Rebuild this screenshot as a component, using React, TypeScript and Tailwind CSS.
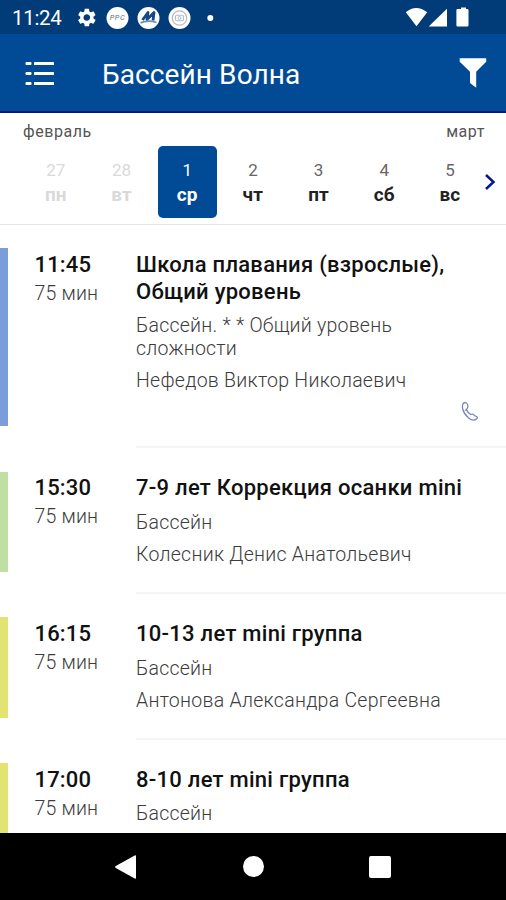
import React from "react";

type Day = { num: string; name: string; state: "past" | "active" | "normal" };

const days: Day[] = [
  { num: "27", name: "пн", state: "past" },
  { num: "28", name: "вт", state: "past" },
  { num: "1", name: "ср", state: "active" },
  { num: "2", name: "чт", state: "normal" },
  { num: "3", name: "пт", state: "normal" },
  { num: "4", name: "сб", state: "normal" },
  { num: "5", name: "вс", state: "normal" },
];

const dayStyles = {
  past: "text-[#d9d9d9]",
  active: "bg-[#014b96] text-white",
  normal: "text-[#222]",
};

type Lesson = {
  time: string;
  title: string;
  place: string;
  coach?: string;
  bar: string;
  barHeight: string;
  rowHeight: string;
  phone?: boolean;
};

const lessons: Lesson[] = [
  {
    time: "11:45",
    title: "Школа плавания (взрослые), Общий уровень",
    place: "Бассейн. * * Общий уровень сложности",
    coach: "Нефедов Виктор Николаевич",
    bar: "bg-[#7b9edb]",
    barHeight: "h-[178px]",
    rowHeight: "h-[223.2px]",
    phone: true,
  },
  {
    time: "15:30",
    title: "7-9 лет Коррекция осанки mini",
    place: "Бассейн",
    coach: "Колесник Денис Анатольевич",
    bar: "bg-[#bfdfa3]",
    barHeight: "h-[100.3px]",
    rowHeight: "h-[145.7px]",
  },
  {
    time: "16:15",
    title: "10-13 лет mini группа",
    place: "Бассейн",
    coach: "Антонова Александра Сергеевна",
    bar: "bg-[#e3e374]",
    barHeight: "h-[100.3px]",
    rowHeight: "h-[145.7px]",
  },
  {
    time: "17:00",
    title: "8-10 лет mini группа",
    place: "Бассейн",
    bar: "bg-[#e3e374]",
    barHeight: "h-[100.3px]",
    rowHeight: "h-[145.7px]",
  },
];

function StatusBar() {
  return (
    <div className="flex h-[34px] shrink-0 items-center bg-[#013c79] pl-3 text-white">
      <span className="mt-[2px] w-[65px] text-[20.5px] leading-none tracking-[-0.3px]">11:24</span>
      <svg className="mt-px h-[22px] w-[140px]" viewBox="0 0 140 22" fill="none">
        <path
          fill="#fff"
          transform="translate(-1.2 -0.5) scale(0.92)"
          d="M19.14 12.94c.04-.3.06-.61.06-.94 0-.32-.02-.64-.07-.94l2.03-1.58a.49.49 0 0 0 .12-.61l-1.92-3.32a.488.488 0 0 0-.59-.22l-2.39.96c-.5-.38-1.03-.7-1.62-.94l-.36-2.54a.484.484 0 0 0-.48-.41h-3.84c-.24 0-.43.17-.47.41l-.36 2.54c-.59.24-1.13.57-1.62.94l-2.39-.96c-.22-.08-.47 0-.59.22L2.74 8.87c-.12.21-.08.47.12.61l2.03 1.58c-.05.3-.09.63-.09.94s.02.64.07.94l-2.03 1.58a.49.49 0 0 0-.12.61l1.92 3.32c.12.22.37.29.59.22l2.39-.96c.5.38 1.03.7 1.62.94l.36 2.54c.05.24.24.41.48.41h3.84c.24 0 .44-.17.47-.41l.36-2.54c.59-.24 1.13-.56 1.62-.94l2.39.96c.22.08.47 0 .59-.22l1.92-3.32c.12-.22.07-.47-.12-.61l-2.01-1.58zM12 15.6A3.61 3.61 0 0 1 8.4 12c0-1.98 1.62-3.6 3.6-3.6s3.6 1.62 3.6 3.6-1.62 3.6-3.6 3.6z"
        />
        <circle cx="40.5" cy="11" r="11" fill="#fff" />
        <text x="40.5" y="13.4" textAnchor="middle" fontSize="7.5" letterSpacing="0.5" fontStyle="italic" fill="#5f7286" fontFamily="Roboto, sans-serif">PPC</text>
        <circle cx="71.5" cy="11" r="11" fill="#fff" />
        <path d="M65.5 13L71 5.5L70 12.5L77 5.5L76 13.5" stroke="#174a83" strokeWidth="2.8" strokeLinejoin="round" />
        <path d="M63.5 15.8Q71 12.8 79.5 15.5" stroke="#6f8fb5" strokeWidth="1.8" />
        <circle cx="102.5" cy="11" r="11" fill="#fff" />
        <circle cx="102.5" cy="11" r="7.2" stroke="#b3bcc8" strokeWidth="1.3" />
        <rect x="98.5" y="8.2" width="8" height="5.6" rx="1.5" stroke="#b3bcc8" strokeWidth="1.1" />
        <circle cx="102.5" cy="11" r="1.5" stroke="#b3bcc8" />
        <circle cx="133.3" cy="11" r="3" fill="#fff" />
      </svg>
      <svg className="ml-auto mr-[36px] h-[22px] w-[66px]" viewBox="0 0 66 22" fill="#fff">
        <path d="M1.8 6.3Q12 -2.2 23.2 6.3L12.5 20.3z" />
        <path d="M43 2.7V20.5H24.7z" />
        <path d="M55 3h2V1.5h5V3h1.3q1.2 0 1.2 1.2V19.3q0 1.2-1.2 1.2H53.6q-1.2 0-1.2-1.2V4.2Q52.4 3 53.6 3z" />
      </svg>
    </div>
  );
}

function Header() {
  return (
    <header className="flex h-[79px] shrink-0 items-center border-b-2 border-[#01187f] bg-[#014b96] pl-[25px] pr-[19px] text-white">
      <svg className="mt-px h-[26px] w-[30px]" viewBox="0 0 30 26" fill="#fff">
        <rect x="0.5" y="2" width="6" height="3" rx="1" />
        <rect x="9" y="2" width="20" height="3" rx="0.5" />
        <rect x="0.5" y="12" width="6" height="3" rx="1" />
        <rect x="9" y="12" width="20" height="3" rx="0.5" />
        <rect x="0.5" y="22" width="6" height="3" rx="1" />
        <rect x="9" y="22" width="20" height="3" rx="0.5" />
      </svg>
      <h1 className="ml-[47px] mt-[5px] text-[28px] leading-none tracking-[0.1px]">Бассейн Волна</h1>
      <svg className="ml-auto h-[31px] w-[28px]" viewBox="0 0 28 31" fill="#fff">
        <path d="M0.7 1.2H27.2V4.8L17.2 14.8V30.8L11 26V14.8L0.7 4.8z" />
      </svg>
    </header>
  );
}

function WeekStrip() {
  return (
    <section className="h-[112px] shrink-0 border-b border-[#e6e6e6]">
      <div className="flex justify-between pl-[23px] pr-[21px] pt-[9px] text-[16px] leading-[19px] tracking-[0.55px] text-[#555]">
        <span>февраль</span>
        <span>март</span>
      </div>
      <div className="flex pl-[23px] pt-[5px]">
        {days.map((d) => (
          <div key={d.num} className="flex w-[65.7px] justify-center">
            <div
              className={`flex h-[71.5px] w-[59px] flex-col items-center rounded-[5px] pt-[14px] ${dayStyles[d.state]}`}
            >
              <span className={`text-[17px] leading-[20px] ${d.state === "normal" ? "text-[#666]" : ""}`}>{d.num}</span>
              <span className="mt-[4px] text-[19px] font-bold leading-[22px] tracking-[0.2px]">{d.name}</span>
            </div>
          </div>
        ))}
        <svg className="mt-[27px] h-[18px] w-[14px]" viewBox="0 0 14 18" fill="none">
          <path d="M3 2L10.500 9L3 16" stroke="#06188c" strokeWidth="2.5" />
        </svg>
      </div>
    </section>
  );
}

function LessonRow({ lesson }: { lesson: Lesson }) {
  return (
    <article className={`flex shrink-0 ${lesson.rowHeight}`}>
      <div className={`mt-[23.4px] w-[7.5px] shrink-0 ${lesson.barHeight} ${lesson.bar}`} />
      <div className="ml-[27px] mt-[26.3px] w-[101.5px] shrink-0">
        <div className="text-[22px] font-medium leading-[28px] tracking-[0.15px] text-[#111]">{lesson.time}</div>
        <div className="mt-[1px] text-[19.5px] font-light leading-[27px] tracking-[0.2px] text-[#3c3c3c]">75 мин</div>
      </div>
      <div className="flex flex-1 flex-col border-b-2 border-[#f5f5f5] pt-[27px]">
        <h2 className="w-[345px] text-[22px] font-medium leading-[26.5px] tracking-[0.27px] text-[#111]">{lesson.title}</h2>
        <p className="mt-[9.3px] w-[290px] text-[19.5px] font-light leading-[23px] tracking-[0.24px] text-[#3c3c3c]">{lesson.place}</p>
        {lesson.coach && (
          <p className="mt-[9.2px] text-[19.5px] font-light leading-[23px] tracking-[0.27px] text-[#3c3c3c]">{lesson.coach}</p>
        )}
        {lesson.phone && (
          <svg className="ml-auto mr-[27px] mt-[9px] h-[21px] w-[18px]" viewBox="0 0 18 21" fill="none">
            <path
              d="M2.2 2.5Q4.500 0.300 6.300 3Q8 6 5.300 8.600Q7 11.800 9.600 13.500Q12.500 12.300 13.500 14.600Q17.300 15.800 16 17.500Q12.500 21 7.500 17Q3 13 1.700 8Q1 4 2.200 2.500zM5.300 8.600L4.300 9.500"
              stroke="#7b86bf"
              strokeWidth="1.3"
              strokeLinejoin="round"
            />
          </svg>
        )}
      </div>
    </article>
  );
}

function NavBar() {
  return (
    <nav className="flex h-[67px] shrink-0 items-center justify-between bg-black pl-[115px] pr-[115px]">
      <svg className="h-[26px] w-[22px]" viewBox="0 0 22 26" fill="#fff">
        <path d="M21 2.200V23.800Q21 25.200 19.700 24.500L0.800 14Q-0.500 13 0.800 12L19.700 1.500Q21 0.800 21 2.200z" />
      </svg>
      <div className="h-[21px] w-[21px] rounded-full bg-white" />
      <div className="h-[22px] w-[22px] rounded-[2px] bg-white" />
    </nav>
  );
}

export default function App() {
  return (
    <div className="flex h-[900px] w-[506px] flex-col overflow-hidden bg-white font-['Roboto','Noto_Sans',sans-serif]">
      <StatusBar />
      <Header />
      <WeekStrip />
      <main className="flex min-h-0 flex-1 flex-col overflow-hidden">
        {lessons.map((l) => (
          <LessonRow key={l.time} lesson={l} />
        ))}
      </main>
      <NavBar />
    </div>
  );
}
